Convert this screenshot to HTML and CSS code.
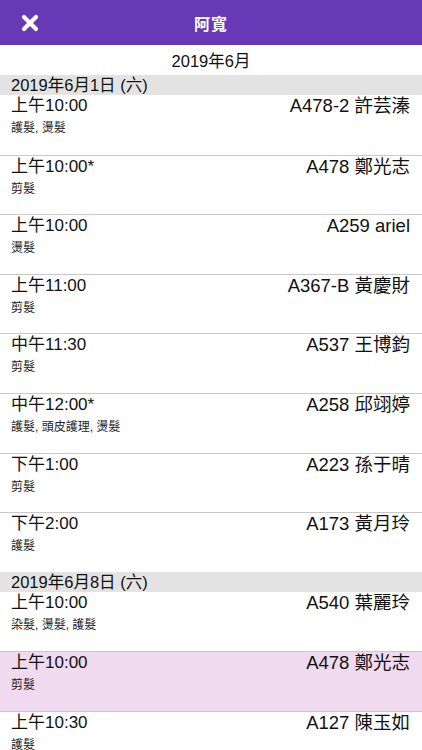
FILE: index.html
```html
<!DOCTYPE html>
<html lang="zh-Hant">
<head>
    <meta charset="UTF-8">
    <meta name="viewport" content="width=device-width, initial-scale=1.0">
    <title>阿寬</title>
    <link rel="stylesheet" href="styles.css">
</head>
<body>
    <div class="navbar">
        <span class="close">
            <svg width="18" height="18" viewBox="0 0 18 18">
                <path d="M3 3 L15 15 M15 3 L3 15" stroke="#fff" stroke-width="4.2" stroke-linecap="round"/>
            </svg>
        </span>
        <span class="title">阿寬</span>
    </div>

    <div class="month">2019年6月</div>

    <div class="day">2019年6月1日 (六)</div>
    <div class="row">
        <div class="line"><span>上午10:00</span><span>A478-2 許芸溱</span></div>
        <div class="note">護髮, 燙髮</div>
    </div>
    <div class="row">
        <div class="line"><span>上午10:00*</span><span>A478 鄭光志</span></div>
        <div class="note">剪髮</div>
    </div>
    <div class="row">
        <div class="line"><span>上午10:00</span><span>A259 ariel</span></div>
        <div class="note">燙髮</div>
    </div>
    <div class="row">
        <div class="line"><span>上午11:00</span><span>A367-B 黃慶財</span></div>
        <div class="note">剪髮</div>
    </div>
    <div class="row">
        <div class="line"><span>中午11:30</span><span>A537 王博鈞</span></div>
        <div class="note">剪髮</div>
    </div>
    <div class="row">
        <div class="line"><span>中午12:00*</span><span>A258 邱翊婷</span></div>
        <div class="note">護髮, 頭皮護理, 燙髮</div>
    </div>
    <div class="row">
        <div class="line"><span>下午1:00</span><span>A223 孫于晴</span></div>
        <div class="note">剪髮</div>
    </div>
    <div class="row">
        <div class="line"><span>下午2:00</span><span>A173 黃月玲</span></div>
        <div class="note">護髮</div>
    </div>

    <div class="day">2019年6月8日 (六)</div>
    <div class="row">
        <div class="line"><span>上午10:00</span><span>A540 葉麗玲</span></div>
        <div class="note">染髮, 燙髮, 護髮</div>
    </div>
    <div class="row marked">
        <div class="line"><span>上午10:00</span><span>A478 鄭光志</span></div>
        <div class="note">剪髮</div>
    </div>
    <div class="row">
        <div class="line"><span>上午10:30</span><span>A127 陳玉如</span></div>
        <div class="note">護髮</div>
    </div>
</body>
</html>
```

FILE: styles.css
```css
body {
    margin: 0;
    background: #fff;
    color: #111;
    font-family: "Liberation Sans", "Noto Sans CJK TC", sans-serif;
    overflow: hidden;
}

.navbar {
    height: 45px;
    background-color: #6739b6;
    color: #fff;
    display: flex;
    align-items: center;
    justify-content: center;
    position: relative;
}

.close {
    position: absolute;
    left: 21px;
    top: 14px;
    display: flex;
}

.title {
    font-size: 16px;
    font-weight: bold;
    letter-spacing: 1px;
}

.month {
    height: 30px;
    display: flex;
    align-items: center;
    justify-content: center;
    font-size: 16.5px;
}

.day {
    height: 20px;
    line-height: 21px;
    background-color: #e3e3e3;
    padding-left: 11px;
    font-size: 16.5px;
}

.row {
    box-sizing: border-box;
    height: 59.6px;
    padding: 1px 12px 0 11px;
    border-top: 1px solid #c9c9c9;
}

.day + .row {
    border-top: none;
}

.row.marked {
    background-color: #f0daef;
}

.line {
    display: flex;
    justify-content: space-between;
    font-size: 17px;
    line-height: 19px;
}

.line span:last-child {
    font-size: 18.5px;
}

.note {
    margin-top: 6px;
    font-size: 12px;
    line-height: 14px;
    color: #222;
}
```
